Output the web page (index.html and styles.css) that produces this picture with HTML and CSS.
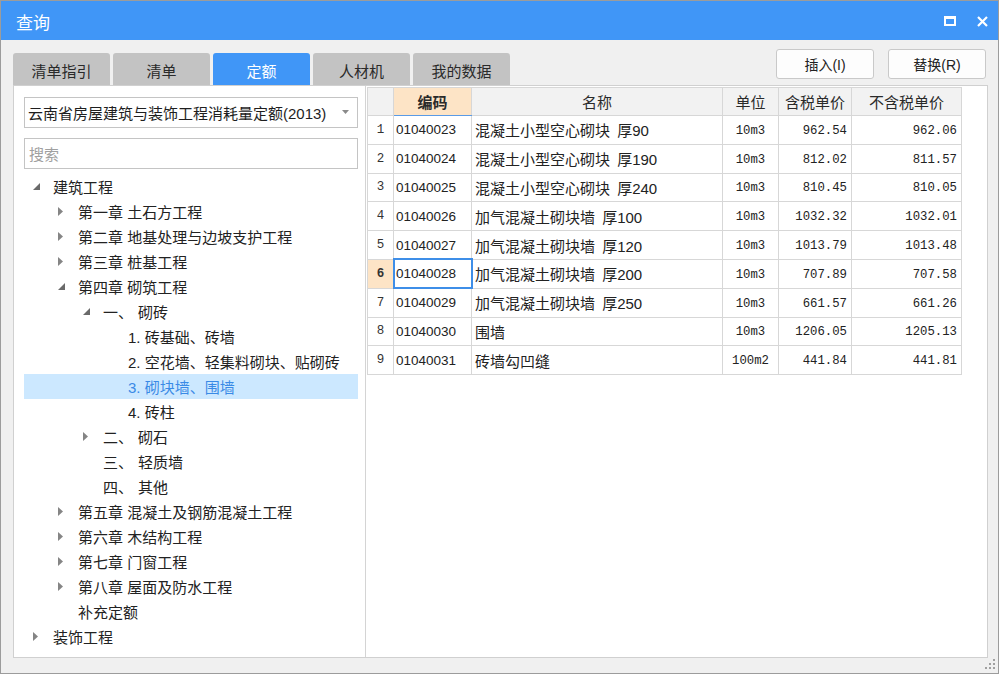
FILE: index.html
```html
<!DOCTYPE html>
<html lang="zh-CN">
<head>
<meta charset="utf-8">
<title>查询</title>
<link rel="stylesheet" href="styles.css">
</head>
<body>
<div class="window">
  <div class="titlebar">
    <span class="title">查询</span>
    <span class="wbtn max"><svg width="12" height="10" viewBox="0 0 12 10"><rect x="1" y="1.5" width="10" height="7.5" fill="none" stroke="#fff" stroke-width="2"/><rect x="0" y="0" width="12" height="3" fill="#fff"/></svg></span>
    <span class="wbtn close"><svg width="11" height="11" viewBox="0 0 11 11"><path d="M1 1L10 10M10 1L1 10" stroke="#fff" stroke-width="2.2" fill="none"/></svg></span>
  </div>
  <div class="toolbar">
    <div class="tabs">
      <div class="tab">清单指引</div>
      <div class="tab">清单</div>
      <div class="tab active">定额</div>
      <div class="tab">人材机</div>
      <div class="tab">我的数据</div>
    </div>
    <div class="actions">
      <button class="btn">插入(I)</button>
      <button class="btn">替换(R)</button>
    </div>
  </div>
  <div class="panel">
    <div class="left">
      <div class="select">
        <span class="select-text">云南省房屋建筑与装饰工程消耗量定额(2013)</span>
        <svg class="caret" width="7" height="4" viewBox="0 0 7 4"><polygon points="0,0 7,0 3.5,4" fill="#8a8a8a"/></svg>
      </div>
      <div class="search">搜索</div>
      <ul class="tree">
        <li class="node l0"><span class="tog"><svg width="7" height="7" viewBox="0 0 7 7"><polygon points="7,0 7,7 0,7" fill="#6a6a6a"/></svg></span>建筑工程</li>
        <li class="node l1"><span class="tog"><svg width="5" height="9" viewBox="0 0 5 9"><polygon points="0,0 5,4.5 0,9" fill="#858585"/></svg></span>第一章 土石方工程</li>
        <li class="node l1"><span class="tog"><svg width="5" height="9" viewBox="0 0 5 9"><polygon points="0,0 5,4.5 0,9" fill="#858585"/></svg></span>第二章 地基处理与边坡支护工程</li>
        <li class="node l1"><span class="tog"><svg width="5" height="9" viewBox="0 0 5 9"><polygon points="0,0 5,4.5 0,9" fill="#858585"/></svg></span>第三章 桩基工程</li>
        <li class="node l1"><span class="tog"><svg width="7" height="7" viewBox="0 0 7 7"><polygon points="7,0 7,7 0,7" fill="#6a6a6a"/></svg></span>第四章 砌筑工程</li>
        <li class="node l2"><span class="tog"><svg width="7" height="7" viewBox="0 0 7 7"><polygon points="7,0 7,7 0,7" fill="#6a6a6a"/></svg></span><span class="num">一、</span>砌砖</li>
        <li class="node l3"><span class="tog"></span>1. 砖基础、砖墙</li>
        <li class="node l3"><span class="tog"></span>2. 空花墙、轻集料砌块、贴砌砖</li>
        <li class="node l3 selected"><span class="tog"></span>3. 砌块墙、围墙</li>
        <li class="node l3"><span class="tog"></span>4. 砖柱</li>
        <li class="node l2"><span class="tog"><svg width="5" height="9" viewBox="0 0 5 9"><polygon points="0,0 5,4.5 0,9" fill="#858585"/></svg></span><span class="num">二、</span>砌石</li>
        <li class="node l2"><span class="tog"></span><span class="num">三、</span>轻质墙</li>
        <li class="node l2"><span class="tog"></span><span class="num">四、</span>其他</li>
        <li class="node l1"><span class="tog"><svg width="5" height="9" viewBox="0 0 5 9"><polygon points="0,0 5,4.5 0,9" fill="#858585"/></svg></span>第五章 混凝土及钢筋混凝土工程</li>
        <li class="node l1"><span class="tog"><svg width="5" height="9" viewBox="0 0 5 9"><polygon points="0,0 5,4.5 0,9" fill="#858585"/></svg></span>第六章 木结构工程</li>
        <li class="node l1"><span class="tog"><svg width="5" height="9" viewBox="0 0 5 9"><polygon points="0,0 5,4.5 0,9" fill="#858585"/></svg></span>第七章 门窗工程</li>
        <li class="node l1"><span class="tog"><svg width="5" height="9" viewBox="0 0 5 9"><polygon points="0,0 5,4.5 0,9" fill="#858585"/></svg></span>第八章 屋面及防水工程</li>
        <li class="node l1"><span class="tog"></span>补充定额</li>
        <li class="node l0"><span class="tog"><svg width="5" height="9" viewBox="0 0 5 9"><polygon points="0,0 5,4.5 0,9" fill="#858585"/></svg></span>装饰工程</li>
      </ul>
    </div>
    <div class="right">
      <table class="grid">
        <colgroup>
          <col class="c-no"><col class="c-code"><col class="c-name"><col class="c-unit"><col class="c-tax"><col class="c-notax">
        </colgroup>
        <thead>
          <tr>
            <th class="h-no"></th>
            <th class="h-code">编码</th>
            <th>名称</th>
            <th>单位</th>
            <th>含税单价</th>
            <th>不含税单价</th>
          </tr>
        </thead>
        <tbody>
          <tr><td class="no">1</td><td class="code">01040023</td><td class="name">混凝土小型空心砌块 <span class="th">厚90</span></td><td class="unit">10m3</td><td class="price">962.54</td><td class="price">962.06</td></tr>
          <tr><td class="no">2</td><td class="code">01040024</td><td class="name">混凝土小型空心砌块 <span class="th">厚190</span></td><td class="unit">10m3</td><td class="price">812.02</td><td class="price">811.57</td></tr>
          <tr><td class="no">3</td><td class="code">01040025</td><td class="name">混凝土小型空心砌块 <span class="th">厚240</span></td><td class="unit">10m3</td><td class="price">810.45</td><td class="price">810.05</td></tr>
          <tr><td class="no">4</td><td class="code">01040026</td><td class="name">加气混凝土砌块墙 <span class="th">厚100</span></td><td class="unit">10m3</td><td class="price">1032.32</td><td class="price">1032.01</td></tr>
          <tr><td class="no">5</td><td class="code">01040027</td><td class="name">加气混凝土砌块墙 <span class="th">厚120</span></td><td class="unit">10m3</td><td class="price">1013.79</td><td class="price">1013.48</td></tr>
          <tr><td class="no cur">6</td><td class="code sel">01040028</td><td class="name">加气混凝土砌块墙 <span class="th">厚200</span></td><td class="unit">10m3</td><td class="price">707.89</td><td class="price">707.58</td></tr>
          <tr><td class="no">7</td><td class="code">01040029</td><td class="name">加气混凝土砌块墙 <span class="th">厚250</span></td><td class="unit">10m3</td><td class="price">661.57</td><td class="price">661.26</td></tr>
          <tr><td class="no">8</td><td class="code">01040030</td><td class="name">围墙</td><td class="unit">10m3</td><td class="price">1206.05</td><td class="price">1205.13</td></tr>
          <tr><td class="no">9</td><td class="code">01040031</td><td class="name">砖墙勾凹缝</td><td class="unit">100m2</td><td class="price">441.84</td><td class="price">441.81</td></tr>
        </tbody>
      </table>
    </div>
  </div>
  <svg class="grip" width="11" height="11" viewBox="0 0 11 11">
    <rect x="8" y="0" width="2" height="2" fill="#a0a0a0"/>
    <rect x="4" y="4" width="2" height="2" fill="#a0a0a0"/>
    <rect x="8" y="4" width="2" height="2" fill="#a0a0a0"/>
    <rect x="0" y="8" width="2" height="2" fill="#a0a0a0"/>
    <rect x="4" y="8" width="2" height="2" fill="#a0a0a0"/>
    <rect x="8" y="8" width="2" height="2" fill="#a0a0a0"/>
  </svg>
</div>
</body>
</html>
```
FILE: styles.css
```css
* { box-sizing: border-box; }
html, body { margin: 0; padding: 0; background: #ffffff; }
body {
  font-family: "Liberation Sans", "Noto Sans CJK SC", sans-serif;
  color: #222222;
}
.window {
  position: relative;
  width: 999px;
  height: 674px;
  border: 1px solid #9c9c9c;
  background: #f0f0f0;
  display: flex;
  flex-direction: column;
}
.titlebar {
  height: 39px;
  flex: none;
  background: #4096f7;
  display: flex;
  align-items: center;
  padding-left: 15px;
  color: #ffffff;
}
.title {
  flex: 1;
  font-family: "Noto Sans CJK SC", sans-serif;
  font-size: 17px;
  margin-top: 1px;
}
.wbtn { display: flex; align-items: center; }
.wbtn.max { margin-right: 21px; margin-top: 1px; }
.wbtn.close { margin-right: 10px; margin-top: 2px; }

.toolbar {
  height: 45px;
  flex: none;
  display: flex;
  justify-content: space-between;
  padding: 0 12px 0 12px;
}
.tabs {
  display: flex;
  align-self: flex-end;
  gap: 3px;
}
.tab {
  width: 97px;
  height: 32px;
  background: #c3c3c3;
  border-radius: 3px 3px 0 0;
  display: flex;
  align-items: center;
  justify-content: center;
  font-family: "Noto Sans CJK SC", sans-serif;
  font-size: 15px;
  color: #2a2a2a;
  padding-top: 2px;
}
.tab.active {
  background: #4096f7;
  color: #ffffff;
}
.actions {
  display: flex;
  gap: 14px;
  padding-top: 9px;
}
.btn {
  width: 98px;
  height: 30px;
  background: #fdfdfd;
  border: 1px solid #c9c9c9;
  border-radius: 3px;
  font-family: "Liberation Sans", "Noto Sans CJK SC", sans-serif;
  font-size: 14px;
  color: #222222;
  padding: 0;
}

.panel {
  height: 573px;
  flex: none;
  margin: 0 10px 0 12px;
  border: 1px solid #d0d0d0;
  background: #ffffff;
  display: flex;
}
.left {
  width: 352px;
  flex: none;
  border-right: 1px solid #d4d4d4;
  padding: 11px 7px 0 10px;
}
.select {
  height: 31px;
  border: 1px solid #c4c4c4;
  display: flex;
  align-items: center;
  padding: 0 8px 0 3px;
}
.select-text {
  flex: 1;
  font-size: 15px;
  color: #1e1e1e;
  white-space: nowrap;
  overflow: hidden;
}
.caret { flex: none; margin-top: -2px; }
.search {
  margin-top: 10px;
  height: 31px;
  border: 1px solid #c4c4c4;
  display: flex;
  align-items: center;
  padding-left: 4px;
  font-family: "Noto Sans CJK SC", sans-serif;
  font-size: 15px;
  color: #a0a0a0;
}
.tree {
  list-style: none;
  margin: 5px 0 0 0;
  padding: 0;
}
.node {
  height: 25px;
  display: flex;
  align-items: center;
  font-size: 15px;
  color: #222222;
  white-space: nowrap;
}
.node.l1 { padding-left: 25px; }
.node.l2 { padding-left: 50px; }
.node.l3 { padding-left: 75px; }
.node.selected {
  background: #cce8ff;
  color: #3a8ae6;
}
.tog {
  width: 29px;
  flex: none;
  display: flex;
  align-items: center;
  padding-left: 9px;
}
.num { margin-right: 5px; }

.right {
  flex: 1;
  padding: 1px 0 0 1px;
}
.grid {
  border-collapse: collapse;
  table-layout: fixed;
  width: 594px;
}
.c-no { width: 26px; }
.c-code { width: 78px; }
.c-name { width: 251px; }
.c-unit { width: 56px; }
.c-tax { width: 73px; }
.c-notax { width: 110px; }
.grid th, .grid td {
  border: 1px solid #d7d7d7;
  padding: 0 3px;
  white-space: nowrap;
  overflow: hidden;
}
.grid thead tr { height: 28px; }
.grid tbody tr { height: 28.8px; }
.grid th {
  background: #f2f2f2;
  font-family: "Noto Sans CJK SC", sans-serif;
  font-weight: normal;
  font-size: 15px;
  color: #2a2a2a;
  text-align: center;
}
.grid th.h-code {
  background: #fde4c6;
  font-weight: bold;
  border-bottom: 1px solid #5a9be6;
}
.grid td.no {
  text-align: center;
  font-family: "Liberation Mono", monospace;
  font-size: 12.5px;
  color: #333333;
  padding: 0;
}
.grid td.no.cur {
  background: #fde4c6;
  font-weight: bold;
}
.grid td.code {
  font-size: 13.5px;
  padding-left: 2px;
}
.grid td.sel {
  outline: 2px solid #3e8ee8;
  outline-offset: -1px;
}
.grid td.name {
  font-size: 15px;
  padding-left: 3px;
}
.th { margin-left: 3px; }
.grid td.unit {
  text-align: center;
  font-family: "Liberation Mono", monospace;
  font-size: 12.3px;
  padding-top: 2px;
}
.grid td.price {
  text-align: right;
  font-family: "Liberation Mono", monospace;
  font-size: 12.3px;
  padding-right: 4px;
  padding-top: 2px;
}
.grip {
  position: absolute;
  right: 2px;
  bottom: 3px;
}
```
